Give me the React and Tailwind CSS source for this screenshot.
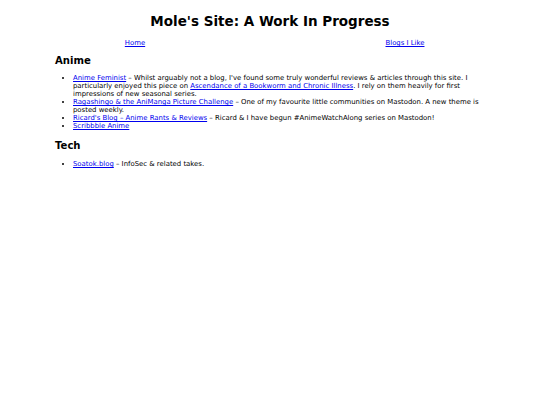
import React from 'react';

const link = 'text-[#0000ee] underline';

function App() {
  return (
    <div className="min-h-[405px] bg-white text-black font-['DejaVu_Sans',Verdana,sans-serif] text-[6.9px] leading-[8px]">
      <h1 className="pt-[13px] text-center text-[13.5px] leading-[16px] font-bold">Mole's Site: A Work In Progress</h1>

      {/* Nav */}
      <nav className="mt-[10px] flex">
        <div className="flex-1 text-center">
          <a href="#" className={link}>Home</a>
        </div>
        <div className="flex-1 text-center">
          <a href="#" className={link}>Blogs I Like</a>
        </div>
      </nav>

      <main className="px-[55px]">
        <h2 className="mt-[8px] text-[10.1px] leading-[12px] font-bold">Anime</h2>
        <ul className="mt-[7px] list-disc pl-[18px]">
          <li>
            <a href="#" className={link}>Anime Feminist</a> – Whilst arguably not a blog, I've found some truly wonderful reviews &amp; articles through this site. I particularly enjoyed this piece on <a href="#" className={link}>Ascendance of a Bookworm and Chronic Illness</a>. I rely on them heavily for first impressions of new seasonal series.
          </li>
          <li>
            <a href="#" className={link}>Ragashingo &amp; the AniManga Picture Challenge</a> – One of my favourite little communities on Mastodon. A new theme is posted weekly.
          </li>
          <li>
            <a href="#" className={link}>Ricard's Blog – Anime Rants &amp; Reviews</a> – Ricard &amp; I have begun #AnimeWatchAlong series on Mastodon!
          </li>
          <li>
            <a href="#" className={link}>Scribbble Anime</a>
          </li>
        </ul>

        <h2 className="mt-[10px] text-[10.1px] leading-[12px] font-bold">Tech</h2>
        <ul className="mt-[8px] list-disc pl-[18px]">
          <li>
            <a href="#" className={link}>Soatok.blog</a> – InfoSec &amp; related takes.
          </li>
        </ul>
      </main>
    </div>
  );
}

export default App;
